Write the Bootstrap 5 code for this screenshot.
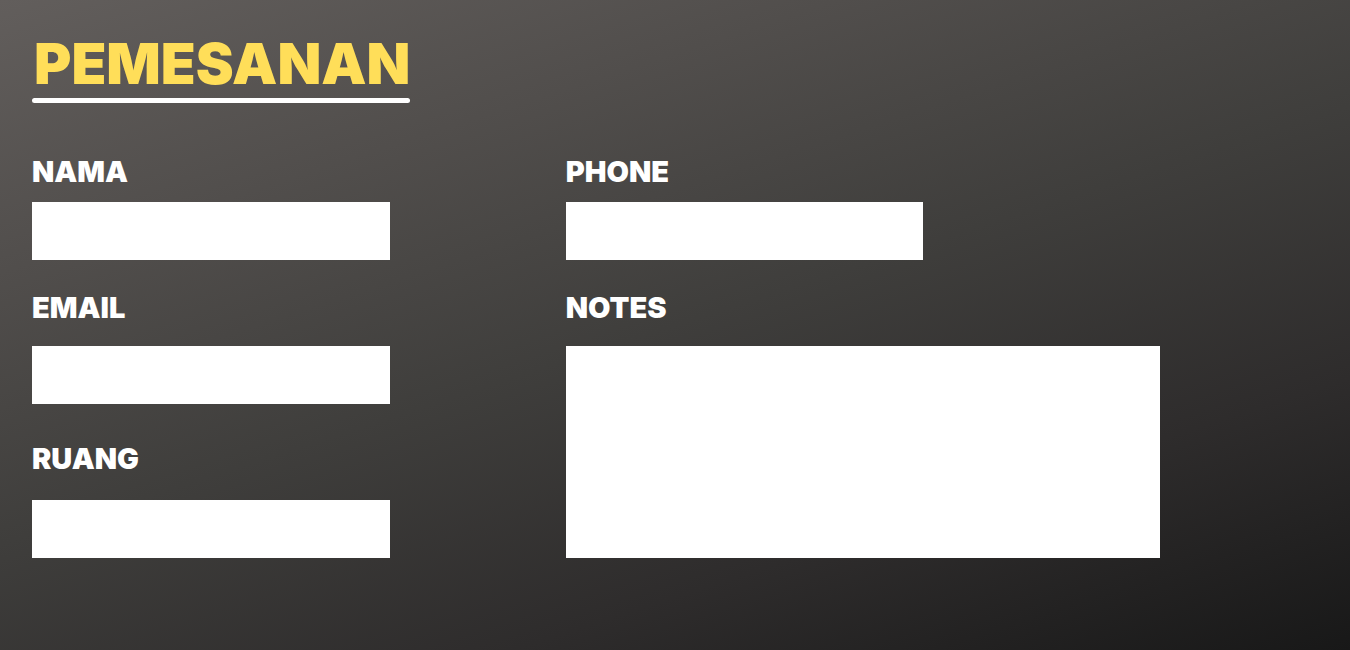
<!DOCTYPE html>
<html lang="id">
<head>
<meta charset="utf-8">
<meta name="viewport" content="width=device-width, initial-scale=1">
<title>Pemesanan</title>
<link href="https://cdn.jsdelivr.net/npm/bootstrap@5.3.0/dist/css/bootstrap.min.css" rel="stylesheet">
<style>
body { font-family: Inter, "Liberation Sans", sans-serif; background: linear-gradient(162deg, #625e5c 0%, #514e4c 25%, #3f3e3c 50%, #2e2c2c 75%, #181818 100%) no-repeat; }
.order-page { padding: 32px; }
.order-title { font-size: 57px; line-height: 64px; font-weight: 900; color: #ffde59; padding-left: 2px; }
.title-rule { height: 5px; border-radius: 3px; background: #fff; margin-top: 2px; }
.order-form { display: grid; grid-template-columns: 27.8% 46.2%; column-gap: 13.7%; row-gap: 28px; margin-top: 49px; }
.order-label { display: block; font-size: 29px; line-height: 40px; font-weight: 900; color: #fff; margin-bottom: 18px; }
.label-near { margin-bottom: 10px; }
.order-field { border: 0; border-radius: 0; background: #fff; height: 58px; }
.field-phone { width: 60.2%; }
.notes-group { grid-column: 2; grid-row: 2 / span 2; }
.room-group { padding-top: 7px; }
.room-group .order-label { margin-bottom: 21px; }
.order-notes { height: 212px; resize: none; }
@media (max-width: 767px) {
  .order-form { grid-template-columns: 100%; }
  .notes-group { grid-column: 1; grid-row: auto; }
  .order-title { font-size: 40px; }
  .field-phone { width: 100%; }
}
</style>
</head>
<body class="min-vh-100">
<main class="order-page">
<header class="d-flex">
  <div>
    <h1 class="order-title mb-0">PEMESANAN</h1>
    <div class="title-rule"></div>
  </div>
</header>
<form class="order-form">
  <div>
    <label class="order-label label-near" for="nama">NAMA</label>
    <input id="nama" name="nama" type="text" class="form-control order-field">
  </div>
  <div>
    <label class="order-label label-near" for="phone">PHONE</label>
    <input id="phone" name="phone" type="tel" class="form-control order-field field-phone">
  </div>
  <div>
    <label class="order-label" for="email">EMAIL</label>
    <input id="email" name="email" type="email" class="form-control order-field">
  </div>
  <div class="notes-group">
    <label class="order-label" for="notes">NOTES</label>
    <textarea id="notes" name="notes" class="form-control order-field order-notes"></textarea>
  </div>
  <div class="room-group">
    <label class="order-label" for="ruang">RUANG</label>
    <input id="ruang" name="ruang" type="text" class="form-control order-field">
  </div>
</form>
</main>
<script src="https://cdn.jsdelivr.net/npm/bootstrap@5.3.0/dist/js/bootstrap.bundle.min.js"></script>
</body>
</html>
